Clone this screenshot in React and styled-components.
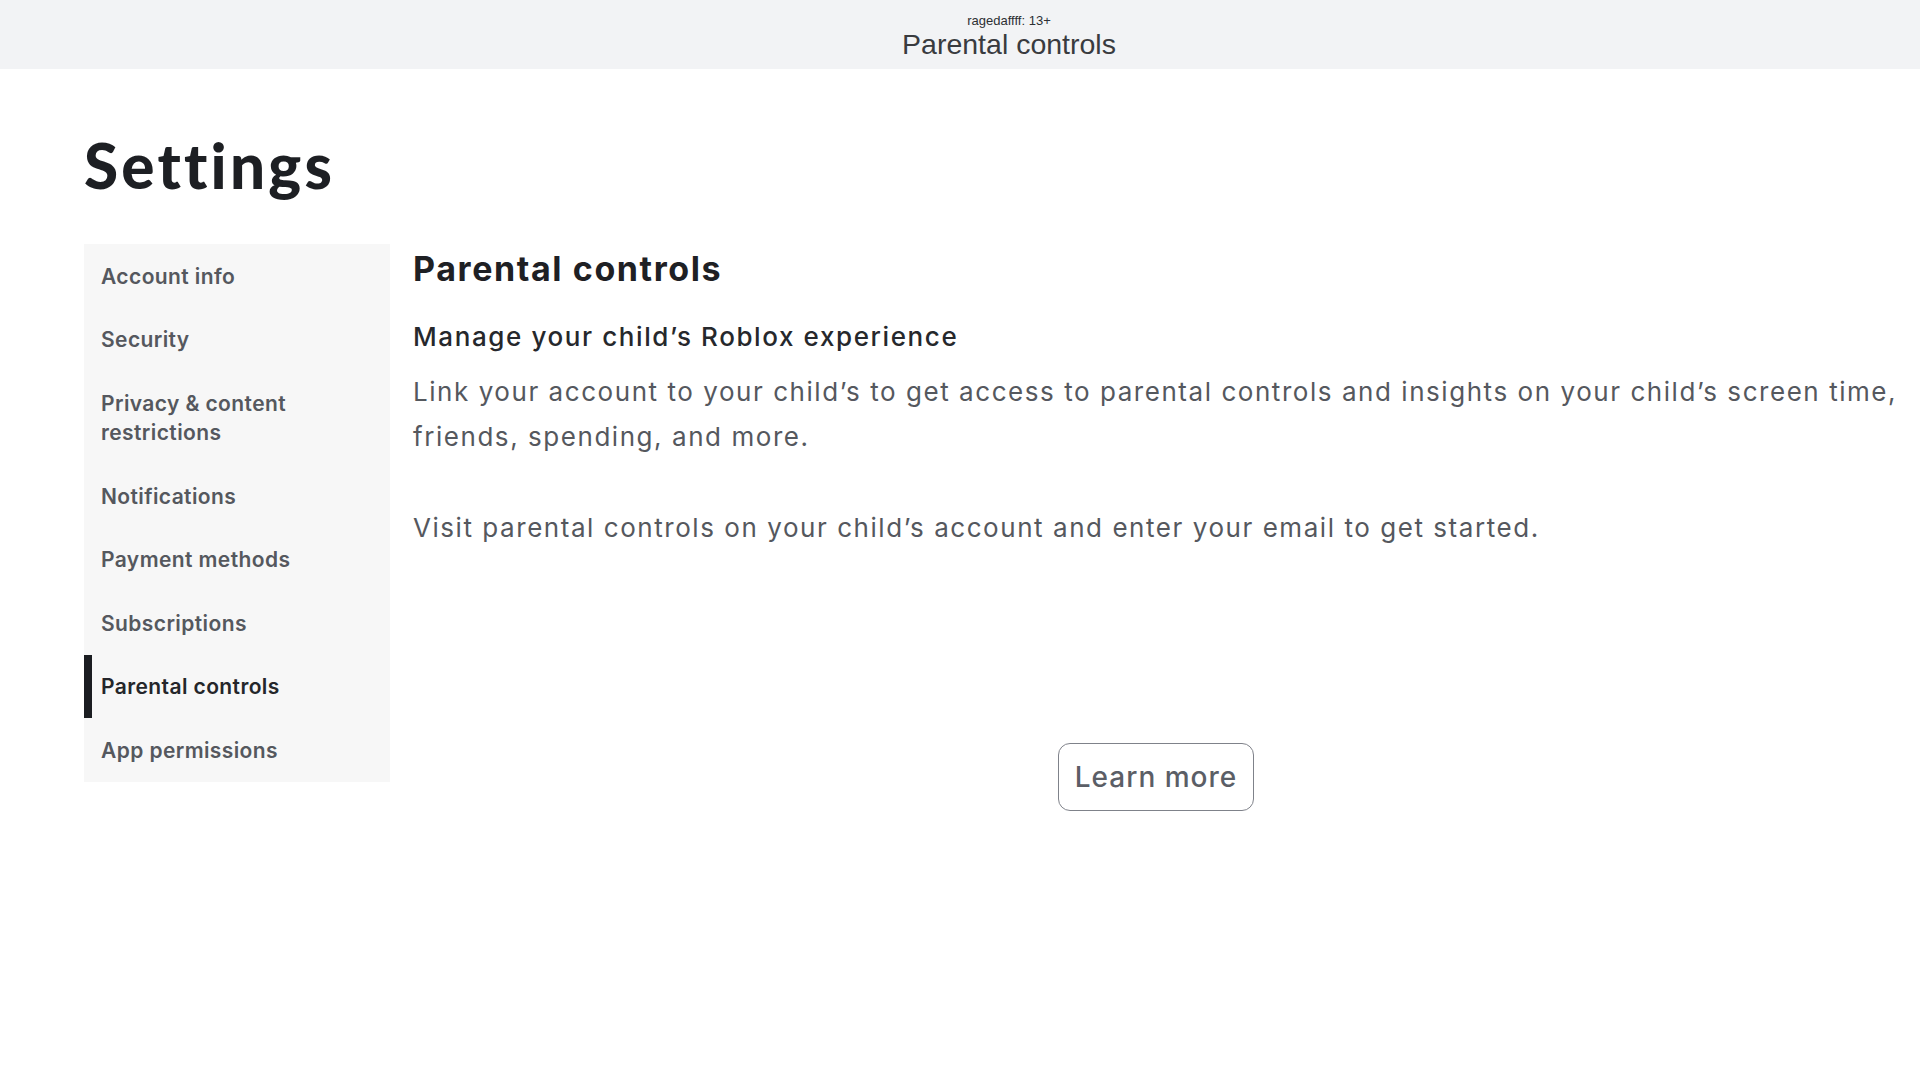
import React from "react";
import styled, { createGlobalStyle } from "styled-components";

const Global = createGlobalStyle`
  html, body { margin: 0; padding: 0; background: #ffffff; }
  body { font-family: Inter, "Noto Sans", sans-serif; }
  * { box-sizing: border-box; }
`;

const TopBar = styled.header`
  height: 69px;
  background: #f2f3f5;
  display: flex;
  flex-direction: column;
  align-items: center;
  padding: 13px 0 0 98px;
  font-family: "Liberation Sans", Arial, sans-serif;
`;

const UserTag = styled.div`
  font-size: 13px;
  line-height: 15px;
  color: #2d2f33;
`;

const TopTitle = styled.div`
  font-size: 28.5px;
  line-height: 32px;
  color: #393b3f;
`;

const Page = styled.main`
  padding: 0 21px 0 84px;
`;

const PageTitle = styled.h1`
  margin: 59px 0 0;
  font-family: Lato, "Noto Sans", sans-serif;
  font-size: 62px;
  line-height: 1.2;
  font-weight: 900;
  color: #1d1f23;
  letter-spacing: 3.2px;
`;

const Layout = styled.div`
  display: flex;
  align-items: flex-start;
  gap: 23px;
  margin-top: 42px;
`;

const Sidebar = styled.nav`
  width: 306px;
  flex: none;
  background: #f7f7f7;
  display: flex;
  flex-direction: column;
`;

const NavItem = styled.div`
  position: relative;
  padding: 17.5px 17px 16.5px;
  font-size: 21px;
  line-height: 29.5px;
  font-weight: 600;
  letter-spacing: 0.4px;
  color: ${(p) => (p.$active ? "#24262a" : "#55585e")};
  &::before {
    content: "";
    display: ${(p) => (p.$active ? "block" : "none")};
    position: absolute;
    left: 0;
    top: 0;
    bottom: 0;
    width: 8px;
    background: #1b1d21;
  }
`;

const Content = styled.section`
  flex: 1;
  display: flex;
  flex-direction: column;
  padding-top: 5px;
`;

const Heading = styled.h2`
  margin: 0;
  font-size: 34px;
  line-height: 40px;
  font-weight: 700;
  letter-spacing: 1.6px;
  color: #1e2024;
`;

const SubHeading = styled.h3`
  margin: 32px 0 0;
  font-size: 26px;
  line-height: 32px;
  font-weight: 500;
  letter-spacing: 1.6px;
  color: #26282c;
`;

const Body = styled.p`
  margin: ${(p) => (p.$gap ? "46px" : "16px")} 0 0;
  font-size: 26px;
  line-height: 45px;
  font-weight: 400;
  letter-spacing: 1.55px;
  color: #55585e;
`;

const ButtonRow = styled.div`
  display: flex;
  justify-content: center;
  margin-top: 193px;
`;

const OutlineButton = styled.button`
  width: 196px;
  height: 68px;
  border: 1.5px solid #7f828a;
  border-radius: 12px;
  background: #ffffff;
  font-family: Inter, "Noto Sans", sans-serif;
  font-size: 28px;
  font-weight: 500;
  letter-spacing: 1px;
  color: #5b5e66;
  cursor: pointer;
`;

const items = [
  "Account info",
  "Security",
  "Privacy & content restrictions",
  "Notifications",
  "Payment methods",
  "Subscriptions",
  "Parental controls",
  "App permissions",
];

export default function App() {
  return (
    <>
      <Global />
      <TopBar>
        <UserTag>ragedaffff: 13+</UserTag>
        <TopTitle>Parental controls</TopTitle>
      </TopBar>
      <Page>
        <PageTitle>Settings</PageTitle>
        <Layout>
          <Sidebar>
            {items.map((it) => (
              <NavItem key={it} $active={it === "Parental controls"}>
                {it === "Privacy & content restrictions" ? (
                  <>
                    Privacy &amp; content
                    <br />
                    restrictions
                  </>
                ) : (
                  it
                )}
              </NavItem>
            ))}
          </Sidebar>
          <Content>
            <Heading>Parental controls</Heading>
            <SubHeading>Manage your child’s Roblox experience</SubHeading>
            <Body>
              Link your account to your child’s to get access to parental controls and insights on your
              child’s screen time, friends, spending, and more.
            </Body>
            <Body $gap>Visit parental controls on your child’s account and enter your email to get started.</Body>
            <ButtonRow>
              <OutlineButton>Learn more</OutlineButton>
            </ButtonRow>
          </Content>
        </Layout>
      </Page>
    </>
  );
}
